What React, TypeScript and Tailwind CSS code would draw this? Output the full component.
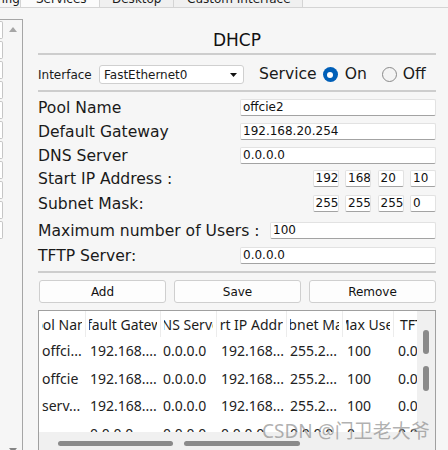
import React from "react";

const HEADERS = [
	{ label: "Pool Name", w: "w-[47px]" },
	{ label: "Default Gateway", w: "w-[75px]" },
	{ label: "DNS Server", w: "w-[56px]" },
	{ label: "Start IP Address", w: "w-[70px]" },
	{ label: "Subnet Mask", w: "w-[56px]" },
	{ label: "Max User", w: "w-[51px]" },
	{ label: "TFTP Server", w: "w-[90px]" },
];

const ROWS = [
	["offci...", "192.168....", "0.0.0.0", "192.168...", "255.2...", "100", "0.0.0.0"],
	["offcie", "192.168....", "0.0.0.0", "192.168...", "255.2...", "100", "0.0.0.0"],
	["serv...", "192.168....", "0.0.0.0", "192.168...", "255.2...", "100", "0.0.0.0"],
	["", "0.0.0.0", "0.0.0.0", "0.0.0.0", "0.0.0.0", "0", "0.0.0.0"],
];

const CELL_PAD = ["pl-[3px]", "pl-[4px]", "pl-[2px]", "pl-[4px]", "pl-[3px]", "pl-[4px]", "pl-[4px]"];

function TextBox({ value, className = "w-[196px]" }: { value: string; className?: string }) {
	return (
		<div
			className={`${className} h-[17px] bg-white border border-[#e2e2e2] border-b-[#a3a3a3] rounded-[2px] pl-[2px] text-[12px] leading-[15px] text-[#111] whitespace-nowrap overflow-hidden`}
		>
			{value}
		</div>
	);
}

function FormRow({ label, h, children }: { label: string; h: string; children: React.ReactNode }) {
	return (
		<div className={`flex items-center ${h}`}>
			<div className="flex-1 pt-[3px] text-[15.6px] text-[#1a1a1a] whitespace-nowrap">{label}</div>
			{children}
		</div>
	);
}

function IpBoxes({ parts }: { parts: string[] }) {
	return (
		<div className="flex gap-[6.5px]">
			{parts.map((p, i) => (
				<TextBox key={i} value={p} className="w-[26px]" />
			))}
		</div>
	);
}

function Sidebar() {
	return (
		<div className="mt-[11px] w-[23px] h-[437px] border-t border-r border-[#a6a6a6] flex shrink-0">
			<div className="w-[3px] flex flex-col pt-[1px]">
				{Array.from({ length: 11 }).map((_, i) => (
					<div
						key={i}
						className="h-[18px] mb-[2px] w-[3px] bg-white border-y border-r border-[#c6c6c6] rounded-r-[2px]"
					/>
				))}
			</div>
			<div className="flex-1 flex flex-col items-center justify-between pt-[7px] pb-[3px]">
				<svg width="8" height="5" viewBox="0 0 8 5">
					<path d="M0 5 L4 0 L8 5 Z" fill="#a6a6a6" />
				</svg>
				<svg width="8" height="5" viewBox="0 0 8 5">
					<path d="M0 0 L8 0 L4 5 Z" fill="#858585" />
				</svg>
			</div>
		</div>
	);
}

function Tabs() {
	return (
		<div className="h-[8px] overflow-hidden flex border-b border-[#d4d4d4]">
			<div className="-mt-[12px] flex text-[12px] leading-[14px] text-[#1a1a1a] whitespace-nowrap">
				<div className="w-[20px] h-[20px] pt-[4px] flex justify-end overflow-hidden">
					<span>Config</span>
				</div>
				<div className="w-[80px] h-[21px] pt-[4px] pl-[15px] bg-[#fbfbfb] border-x border-[#d4d4d4]">
					Services
				</div>
				<div className="w-[74px] h-[20px] pt-[4px] pl-[12px] bg-[#f0f0f0] border-r border-[#d4d4d4]">
					Desktop
				</div>
				<div className="w-[129px] h-[20px] pt-[4px] pl-[13px] bg-[#f0f0f0] border-r border-[#d4d4d4]">
					Custom Interface
				</div>
			</div>
		</div>
	);
}

function PoolTable() {
	return (
		<div className="mt-[7px] h-[141px] border border-[#a0a0a0] flex bg-white">
			<div className="w-[378px] flex flex-col">
				<div className="h-[121px] overflow-hidden">
					<div className="flex h-[26px] w-[445px]">
						{HEADERS.map((h) => (
							<div
								key={h.label}
								className={`${h.w} shrink-0 h-full border-r border-[#ececec] px-[3px]`}
							>
								<div className="h-full flex items-center justify-center overflow-hidden whitespace-nowrap text-[14px] text-[#1c1c1c]">
									{h.label}
								</div>
							</div>
						))}
					</div>
					{ROWS.map((row, r) => (
						<div key={r} className="flex h-[27.5px] w-[445px] items-center">
							{row.map((cell, c) => (
								<div
									key={c}
									className={`${HEADERS[c].w} ${CELL_PAD[c]} shrink-0 whitespace-nowrap overflow-hidden text-[14px] text-[#222]`}
								>
									{cell}
								</div>
							))}
						</div>
					))}
				</div>
				<div className="h-[18px] bg-[#f0f0f0] flex items-center gap-[11px] pl-[19px] pt-[4px]">
					<div className="w-[115px] h-[5px] rounded-full bg-[#8a8a8a]" />
					<div className="w-[116px] h-[5px] rounded-full bg-[#8a8a8a]" />
				</div>
			</div>
			<div className="w-[18px] bg-[#f0f0f0] flex flex-col items-center pt-[19px] gap-[12px]">
				<div className="w-[6px] h-[24px] rounded-full bg-[#8a8a8a]" />
				<div className="w-[6px] h-[25px] rounded-full bg-[#8a8a8a]" />
			</div>
		</div>
	);
}

export default function App() {
	return (
		<div
			className="relative w-[448px] h-[450px] overflow-hidden bg-[#f6f6f6] text-[#1a1a1a]"
			style={{ fontFamily: '"DejaVu Sans", Verdana, sans-serif' }}
		>
			<Tabs />
			<div className="flex">
				<Sidebar />
				<div className="ml-[15px] w-[398px] pt-[22px] flex flex-col">
					<div className="h-[20px] text-center text-[17px] leading-[20px] text-[#111]">DHCP</div>
					<div className="mt-[3px] h-[2px] bg-[#cdcdcd]" />

					<div className="h-[35px] pt-[4px] flex items-center">
						<span className="text-[12px] w-[61px]">Interface</span>
						<div className="w-[145px] h-[19px] bg-white border border-[#d0d0d0] rounded-[3px] flex items-center justify-between pl-[4px] pr-[6px]">
							<span className="text-[12px]">FastEthernet0</span>
							<svg width="7" height="4" viewBox="0 0 7 4">
								<path d="M0 0 L7 0 L3.5 4 Z" fill="#111" />
							</svg>
						</div>
						<span className="ml-[15px] text-[15.6px]">Service</span>
						<span className="ml-[6px] w-[15px] h-[15px] rounded-full bg-[#005fb8] flex items-center justify-center">
							<span className="w-[6px] h-[6px] rounded-full bg-white" />
						</span>
						<span className="ml-[7px] text-[15.6px]">On</span>
						<span className="ml-[15px] w-[15px] h-[15px] rounded-full border border-[#8a8a8a] bg-[#f4f4f4]" />
						<span className="ml-[6px] text-[15.6px]">Off</span>
					</div>
					<div className="h-[2px] bg-[#cdcdcd]" />

					<div className="pt-[4px] flex flex-col">
						<FormRow label="Pool Name" h="h-[23px]">
							<TextBox value="offcie2" />
						</FormRow>
						<FormRow label="Default Gateway" h="h-[24px]">
							<TextBox value="192.168.20.254" />
						</FormRow>
						<FormRow label="DNS Server" h="h-[24px]">
							<TextBox value="0.0.0.0" />
						</FormRow>
						<FormRow label="Start IP Address :" h="h-[22px]">
							<IpBoxes parts={["192", "168", "20", "10"]} />
						</FormRow>
						<FormRow label="Subnet Mask:" h="h-[28px]">
							<IpBoxes parts={["255", "255", "255", "0"]} />
						</FormRow>
						<FormRow label="Maximum number of Users :" h="h-[26px]">
							<TextBox value="100" className="w-[166px]" />
						</FormRow>
						<FormRow label="TFTP Server:" h="h-[25px]">
							<TextBox value="0.0.0.0" />
						</FormRow>
					</div>
					<div className="mt-[3px] h-[2px] bg-[#cdcdcd]" />

					<div className="mt-[7px] h-[23px] flex gap-[8px] pl-[1px]">
						{["Add", "Save", "Remove"].map((b) => (
							<button
								key={b}
								type="button"
								className="flex-1 h-full bg-[#fdfdfd] border border-[#cfcfcf] rounded-[3px] text-[12px] text-[#111]"
							>
								{b}
							</button>
						))}
					</div>

					<div style={{ fontFamily: '"Noto Sans", "Open Sans", sans-serif' }}>
						<PoolTable />
					</div>
				</div>
			</div>

			<div
				className="absolute left-[262px] top-[418px] leading-[26px] text-[19px] text-[#8e8e8e]/70 whitespace-nowrap"
				style={{ fontFamily: '"Noto Sans", "Noto Sans CJK SC", sans-serif' }}
			>
				CSDN @门卫老大爷
			</div>
		</div>
	);
}
